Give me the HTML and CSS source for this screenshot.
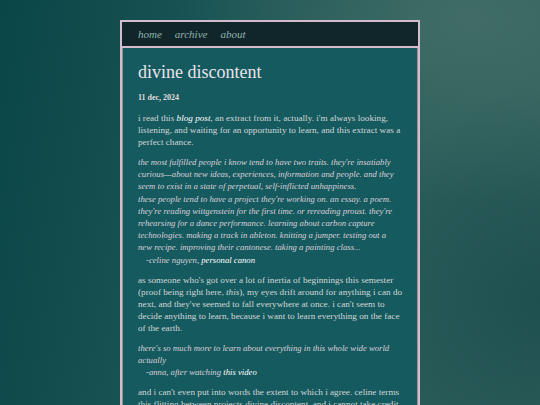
FILE: index.html
```html
<!DOCTYPE html>
<html>
<head>
<meta charset="utf-8">
<link rel="stylesheet" href="styles.css">
</head>
<body>
<div class="page">
  <div class="frame">
    <nav class="nav">
      <a class="nav-link">home</a>
      <a class="nav-link">archive</a>
      <a class="nav-link">about</a>
    </nav>
    <main class="content">
      <h1 class="title">divine discontent</h1>
      <p class="date">11 dec, 2024</p>
      <p class="para">i read this <a class="link">blog post</a>, an extract from it, actually. i'm always looking, listening, and waiting for an opportunity to learn, and this extract was a perfect chance.</p>
      <blockquote class="quote">
        <p class="quote-text">the most fulfilled people i know tend to have two traits. they're insatiably curious—about new ideas, experiences, information and people. and they seem to exist in a state of perpetual, self-inflicted unhappiness.<br>these people tend to have a project they're working on. an essay. a poem. they're reading wittgenstein for the first time. or rereading proust. they're rehearsing for a dance performance. learning about carbon capture technologies. making a track in ableton. knitting a jumper. testing out a new recipe. improving their cantonese. taking a painting class...</p>
        <p class="cite">-celine nguyen, <a class="link">personal canon</a></p>
      </blockquote>
      <p class="para">as someone who's got over a lot of inertia of beginnings this semester (proof being right here, <em>this</em>), my eyes drift around for anything i can do next, and they've seemed to fall everywhere at once. i can't seem to decide anything to learn, because i want to learn everything on the face of the earth.</p>
      <blockquote class="quote">
        <p class="quote-text">there's so much more to learn about everything in this whole wide world actually</p>
        <p class="cite">-anna, after watching <a class="link">this video</a></p>
      </blockquote>
      <p class="para">and i can't even put into words the extent to which i agree. celine terms this flitting between projects divine discontent, and i cannot take credit for the phrase, but i have felt it all the same.</p>
    </main>
  </div>
</div>
</body>
</html>
```

FILE: styles.css
```css
html, body {
  margin: 0;
  padding: 0;
  height: 100%;
}
body {
  background:
    radial-gradient(ellipse 420px 260px at 470px 20px, rgba(80,120,110,0.55), rgba(80,120,110,0) 70%),
    radial-gradient(ellipse 300px 300px at 540px 300px, rgba(20,70,72,0.6), rgba(20,70,72,0) 70%),
    linear-gradient(100deg, #0a4547 0%, #1a5455 35%, #2c5e5b 70%, #2f5f5b 100%);
  font-family: "Liberation Serif", "DejaVu Serif", serif;
  overflow: hidden;
}
.page {
  display: flex;
  justify-content: center;
  padding-top: 20px;
}
.frame {
  width: 296px;
  border: 2px solid #d3bccb;
  box-shadow: inset 0 0 0 1px #9c8e98;
  background: #155a5f;
}
.nav {
  display: flex;
  gap: 13px;
  height: 24px;
  align-items: center;
  padding: 0 16px;
  background: #10262a;
  border-bottom: 2px solid #d3bccb;
}
.nav-link {
  font-style: italic;
  font-size: 11px;
  color: #93b3b0;
}
.content {
  padding: 12px 10px 20px 16px;
  color: #d2d6d6;
}
.title {
  margin: 0;
  font-weight: normal;
  font-size: 18px;
  line-height: 24px;
  color: #ece3ea;
}
.date {
  margin: 8px 0 0 0;
  font-size: 8px;
  font-weight: bold;
  color: #e2dade;
  line-height: 12px;
}
.para {
  margin: 8px 0 0 0;
  font-size: 9.2px;
  line-height: 12px;
}
.link {
  font-style: italic;
  color: #ffffff;
}
.quote {
  margin: 8px 6px 0 0;
  font-style: italic;
  font-size: 8.7px;
  line-height: 12.2px;
  color: #dccfd9;
}
.quote-text {
  margin: 0;
}
.cite {
  margin: 0;
  padding-left: 8px;
}
```
